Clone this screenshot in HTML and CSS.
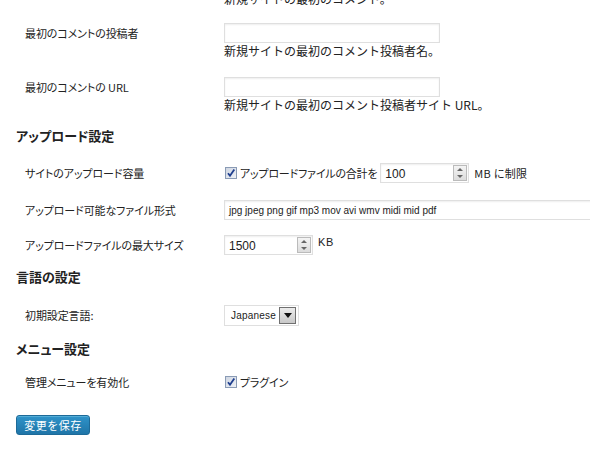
FILE: index.html
```html
<!DOCTYPE html>
<html lang="ja">
<head>
<meta charset="utf-8">
<title>ネットワーク設定</title>
<link rel="stylesheet" href="styles.css">
</head>
<body>
<div class="page">
  <p class="desc desc-cut">新規サイトの最初のコメント。</p>

  <div class="row row-c1">
    <div class="label">最初のコメントの投稿者</div>
    <div class="field">
      <div class="text-input"></div>
      <p class="desc">新規サイトの最初のコメント投稿者名。</p>
    </div>
  </div>

  <div class="row row-c2">
    <div class="label">最初のコメントの URL</div>
    <div class="field">
      <div class="text-input"></div>
      <p class="desc">新規サイトの最初のコメント投稿者サイト URL。</p>
    </div>
  </div>

  <h3 class="heading h-upload">アップロード設定</h3>

  <div class="row row-u1">
    <div class="label">サイトのアップロード容量</div>
    <div class="field inline">
      <span class="checkbox"><svg width="12" height="12" viewBox="0 0 12 12"><path d="M3 6.2 L5 8.8 L9.3 2.6" fill="none" stroke="#1f3f8f" stroke-width="1.8"/></svg></span>
      <span class="cb-text">アップロードファイルの合計を</span>
      <div class="num-input w-quota"><span class="num-val">100</span><span class="spin"><i class="up"></i><i class="down"></i></span></div>
      <span class="unit">MB に制限</span>
    </div>
  </div>

  <div class="row row-u2">
    <div class="label">アップロード可能なファイル形式</div>
    <div class="field">
      <div class="text-input wide"><span class="ext">jpg jpeg png gif mp3 mov avi wmv midi mid pdf</span></div>
    </div>
  </div>

  <div class="row row-u3">
    <div class="label">アップロードファイルの最大サイズ</div>
    <div class="field inline top">
      <div class="num-input w-size"><span class="num-val">1500</span><span class="spin"><i class="up"></i><i class="down"></i></span></div>
      <span class="unit kb">KB</span>
    </div>
  </div>

  <h3 class="heading h-lang">言語の設定</h3>

  <div class="row row-l1">
    <div class="label">初期設定言語:</div>
    <div class="field">
      <div class="select"><span class="sel-val">Japanese</span><span class="sel-btn"><svg width="8" height="5" viewBox="0 0 8 5"><path d="M0 0 H8 L4 5 Z" fill="#111"/></svg></span></div>
    </div>
  </div>

  <h3 class="heading h-menu">メニュー設定</h3>

  <div class="row row-m1">
    <div class="label">管理メニューを有効化</div>
    <div class="field inline">
      <span class="checkbox"><svg width="12" height="12" viewBox="0 0 12 12"><path d="M3 6.2 L5 8.8 L9.3 2.6" fill="none" stroke="#1f3f8f" stroke-width="1.8"/></svg></span>
      <span class="cb-text">プラグイン</span>
    </div>
  </div>

  <div class="actions">
    <button class="button-primary">変更を保存</button>
  </div>
</div>
</body>
</html>
```

FILE: styles.css
```css
html, body {
  margin: 0;
  padding: 0;
  overflow: hidden;
  background: #fff;
}
body {
  font-family: "Noto Sans CJK JP", "Liberation Sans", sans-serif;
  font-size: 12px;
  color: #222;
}
.page {
  padding-left: 16px;
  display: flex;
  flex-direction: column;
  width: 620px;
}
.desc {
  margin: 0;
  line-height: 16px;
  font-size: 12px;
  color: #222;
  letter-spacing: 0;
}
.desc-cut {
  margin-left: 208px;
  margin-top: -9px;
}
.row {
  display: grid;
  grid-template-columns: 208px 1fr;
  align-items: start;
}
.label {
  padding-left: 9px;
  line-height: 20px;
  font-size: 11px;
  font-feature-settings: "palt";
  letter-spacing: -0.1px;
}
.field.inline {
  display: flex;
  align-items: center;
  height: 20px;
}
.field.inline.top {
  align-items: flex-start;
}
.row-c1 { margin-top: 16px; }
.row-c2 { margin-top: 18px; }
.row-u1 { margin-top: 17px; }
.row-u2 { margin-top: 17px; }
.row-u3 { margin-top: 15px; }
.row-l1 { margin-top: 18px; }
.row-m1 { margin-top: 13px; }
.heading {
  margin: 0;
  font-size: 13px;
  font-weight: bold;
  line-height: 20px;
  font-feature-settings: "palt";
  letter-spacing: 0;
  color: #222;
}
.h-upload { margin-top: 13px; }
.h-lang { margin-top: 12px; }
.h-menu { margin-top: 13px; }

.text-input {
  box-sizing: border-box;
  width: 216px;
  height: 20px;
  border: 1px solid #dfdfdf;
  box-shadow: inset 0 1px 2px rgba(0,0,0,0.07);
  background: #fff;
  display: flex;
  align-items: center;
  padding-left: 4px;
}
.text-input.wide { width: 380px; }
.ext {
  font-family: "Liberation Sans", sans-serif;
  font-size: 10px;
  color: #222;
}
.checkbox {
  box-sizing: border-box;
  width: 12px;
  height: 12px;
  margin-left: 1px;
  border: 1px solid #8a9bb5;
  background: linear-gradient(135deg, #cfd6e2, #eef1f6);
  display: inline-flex;
  align-items: center;
  justify-content: center;
}
.checkbox svg { display: block; margin: -1px; }
.cb-text {
  margin-left: 3px;
  font-size: 11px;
  font-feature-settings: "palt";
  letter-spacing: -0.2px;
}
.num-input {
  box-sizing: border-box;
  height: 20px;
  border: 1px solid #dfdfdf;
  box-shadow: inset 0 1px 2px rgba(0,0,0,0.07);
  display: flex;
  align-items: center;
  justify-content: space-between;
  padding-left: 4px;
  padding-right: 1px;
  background: #fff;
}
.w-quota { width: 89px; margin-left: 3px; }
.w-size { width: 89px; }
.num-val {
  font-family: "Liberation Sans", sans-serif;
  font-size: 12px;
  color: #222;
  padding-top: 2px;
}
.spin {
  box-sizing: border-box;
  width: 14px;
  height: 16px;
  border: 1px solid #bbb;
  background: linear-gradient(#f4f4f4, #dcdcdc);
  display: flex;
  flex-direction: column;
  justify-content: space-around;
  align-items: center;
}
.spin i {
  display: block;
  width: 0;
  height: 0;
  border-left: 3px solid transparent;
  border-right: 3px solid transparent;
}
.spin .up { border-bottom: 3px solid #666; }
.spin .down { border-top: 3px solid #666; }
.unit {
  margin-left: 5px;
  font-size: 11px;
  font-feature-settings: "palt";
  letter-spacing: 0.3px;
}
.unit.kb {
  font-family: "Liberation Sans", sans-serif;
  font-size: 11px;
  margin-left: 5px;
  line-height: 14px;
  letter-spacing: 0.6px;
}
.select {
  box-sizing: border-box;
  width: 75px;
  height: 21px;
  border: 1px solid #dfdfdf;
  display: flex;
  align-items: center;
  justify-content: space-between;
  padding: 0 2px 0 6px;
  background: #fff;
}
.sel-val {
  font-family: "Liberation Sans", sans-serif;
  font-size: 10px;
  letter-spacing: 0.2px;
  color: #222;
}
.sel-btn {
  box-sizing: border-box;
  width: 17px;
  height: 17px;
  border: 1px solid #707070;
  background: linear-gradient(#ececec, #c8c8c8);
  display: flex;
  align-items: center;
  justify-content: center;
}
.sel-btn svg { display: block; }
.actions {
  margin-top: 23px;
}
.button-primary {
  box-sizing: border-box;
  width: 74px;
  height: 20px;
  border: 1px solid #1d6a98;
  border-radius: 3px;
  background: linear-gradient(#2f93c9, #1f75a8);
  color: #fff;
  font-family: "Noto Sans CJK JP", sans-serif;
  font-size: 11px;
  letter-spacing: 0.5px;
  padding: 0;
  line-height: 18px;
  box-shadow: 0 1px 0 rgba(120,200,230,0.5) inset;
}
```
